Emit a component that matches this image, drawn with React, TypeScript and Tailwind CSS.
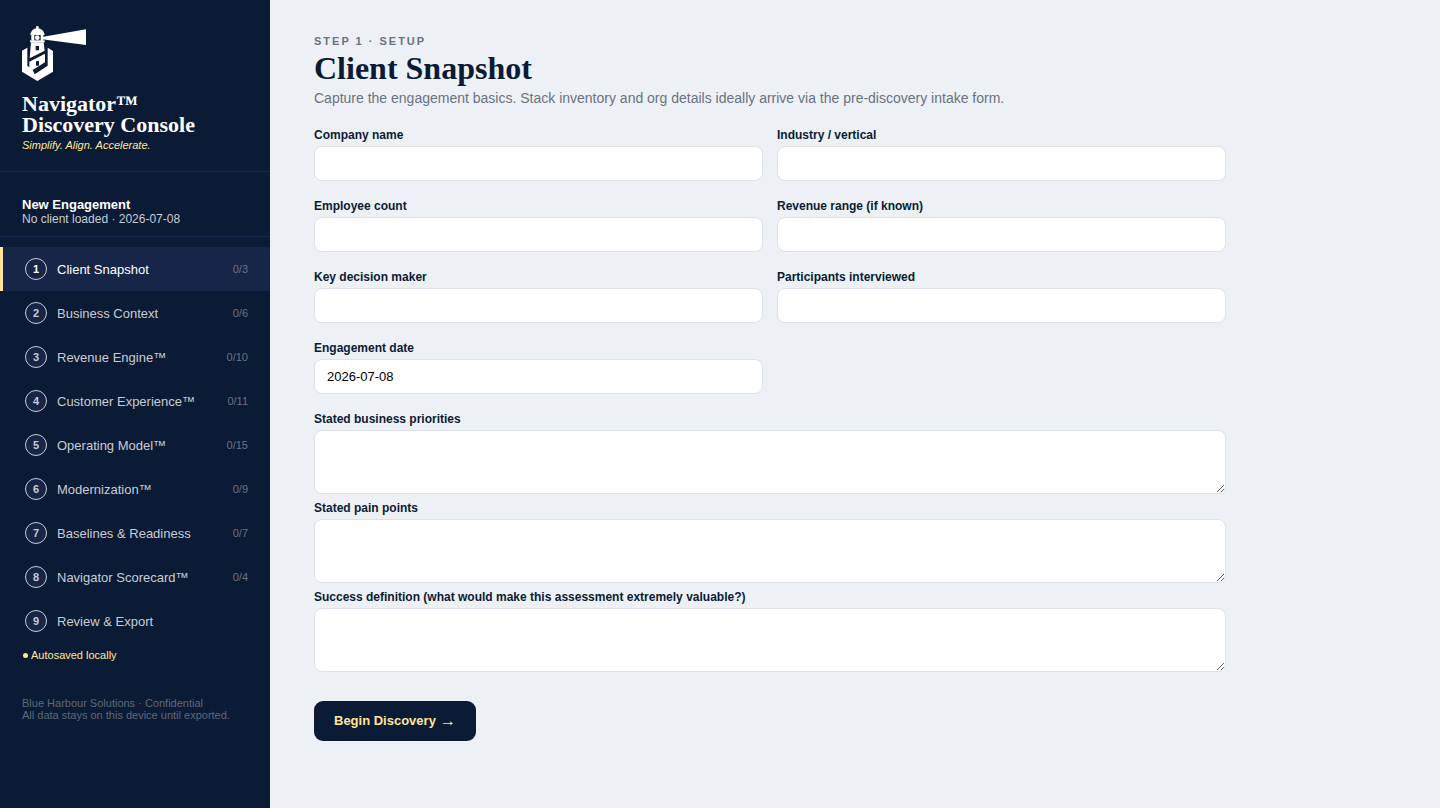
import React from 'react';

interface Step {
    label: string;
    progress?: string;
}

const STEPS: Step[] = [
    { label: 'Client Snapshot', progress: '0/3' },
    { label: 'Business Context', progress: '0/6' },
    { label: 'Revenue Engine™', progress: '0/10' },
    { label: 'Customer Experience™', progress: '0/11' },
    { label: 'Operating Model™', progress: '0/15' },
    { label: 'Modernization™', progress: '0/9' },
    { label: 'Baselines & Readiness', progress: '0/7' },
    { label: 'Navigator Scorecard™', progress: '0/4' },
    { label: 'Review & Export' },
];

const FIELDS = [
    { id: 'company', label: 'Company name', value: '' },
    { id: 'industry', label: 'Industry / vertical', value: '' },
    { id: 'employees', label: 'Employee count', value: '' },
    { id: 'revenue', label: 'Revenue range (if known)', value: '' },
    { id: 'decision-maker', label: 'Key decision maker', value: '' },
    { id: 'participants', label: 'Participants interviewed', value: '' },
    { id: 'date', label: 'Engagement date', value: '2026-07-08' },
];

const NOTES = [
    { id: 'priorities', label: 'Stated business priorities' },
    { id: 'pain-points', label: 'Stated pain points' },
    { id: 'success', label: 'Success definition (what would make this assessment extremely valuable?)' },
];

const LighthouseLogo = () => (
    <svg viewBox="36 33 192 165" className="h-[55px] w-16" fill="#fff" aria-hidden="true">
        {/* Lantern room */}
        <circle cx="82" cy="37" r="4" />
        <path d="M61 60C62 48 71 40 82 39C93 40 102 48 104 60Z" />
        <path d="M64 60H73V77H64ZM92 60H100V77H92Z" />
        <circle cx="82" cy="68" r="7" />
        <path d="M60 76H104V82H60Z" />
        {/* Beam */}
        <path d="M96 66L228 43V90L96 73Z" />
        {/* Tower */}
        <path fillRule="evenodd" d="M63 82H101L104 107L59 130ZM77 93V106H87V93Z" />
        <path fillRule="evenodd" d="M58 140L105 116V142L68 165L58 159ZM78 139V152H87V137Z" />
        {/* Hexagonal base */}
        <path d="M36 107L52 98V152L68 165L74 178L113 152V98L129 108V170L82 198L36 170Z" />
    </svg>
);

const Sidebar = () => (
    <aside className="w-[270px] shrink-0 bg-[#0b1b35] text-[#c9ccd4]">
        <div className="border-b border-[#17264a] px-[22px] pt-[26px] pb-[18px]">
            <LighthouseLogo />
            <div className="mt-3 font-['Liberation_Serif',serif] text-[22px] leading-[21px] font-bold text-white">
                Navigator™
                <br />
                Discovery Console
            </div>
            <p className="mt-[3px] pb-px text-[11px] leading-[14px] text-[#ffe69b] italic">
                Simplify. Align. Accelerate.
            </p>
        </div>
        <div className="border-b border-[#17264a] px-[22px] pt-[25px] pb-[10px]">
            <p className="text-[13px] leading-[15px] font-bold text-white">New Engagement</p>
            <p className="text-[12px] leading-[14px]">No client loaded · 2026-07-08</p>
        </div>
        <nav className="pt-[10px]">
            {STEPS.map((step, i) => (
                <button
                    key={step.label}
                    type="button"
                    aria-current={i === 0 ? 'step' : undefined}
                    className={`flex h-11 w-full items-center gap-[10px] border-l-[3px] px-[22px] text-left text-[13px] leading-[18px] ${
                        i === 0 ? 'border-[#ffe69b] bg-[#172549] text-white' : 'border-transparent'
                    }`}
                >
                    <span className="flex size-[22px] items-center justify-center rounded-full border border-[#c9ccd4] bg-[#172549] text-[11px] font-bold">
                        {i + 1}
                    </span>
                    <span className="flex-1 pt-px">{step.label}</span>
                    {step.progress && <span className="text-[11px] text-[#6b7280]">{step.progress}</span>}
                </button>
            ))}
        </nav>
        <p className="flex items-center gap-[3px] px-[23px] pt-[6px] text-[11px] leading-[13px] text-[#ffe69b]">
            <span className="size-[5px] rounded-full bg-[#ffe69b]" />
            Autosaved locally
        </p>
        <footer className="px-[22px] pt-[35px] pb-6 text-[11px] leading-[12px] text-[#5f6879]">
            Blue Harbour Solutions · Confidential
            <br />
            All data stays on this device until exported.
        </footer>
    </aside>
);

export default function App() {
    return (
        <div className="flex min-h-screen bg-[#edf1f6] font-['Liberation_Sans',Arial,sans-serif] text-[#0b1b35]">
            <Sidebar />
            <main className="max-w-[1000px] min-w-0 flex-1 px-11 pt-[34px] pb-16">
                <p className="text-[11px] leading-[14px] font-bold tracking-[2px] text-[#6b7280]">STEP 1 · SETUP</p>
                <h1 className="mt-[3px] font-['Liberation_Serif',serif] text-[32px] leading-[34px] font-bold">
                    Client Snapshot
                </h1>
                <p className="mt-[5px] text-[14px] leading-[16px] text-[#6b7280]">
                    Capture the engagement basics. Stack inventory and org details ideally arrive via the pre-discovery
                    intake form.
                </p>

                <form onSubmit={e => e.preventDefault()}>
                    <div className="mt-[22px] grid grid-cols-2 gap-x-[14px]">
                        {FIELDS.map(field => (
                            <div key={field.id} className="pb-[18px]">
                                <label htmlFor={field.id} className="block text-[12px] leading-[14px] font-bold">
                                    {field.label}
                                </label>
                                <input
                                    id={field.id}
                                    type="text"
                                    defaultValue={field.value}
                                    className="mt-1 block h-[35px] w-full rounded-lg border border-[#dde1ea] bg-white px-3 text-[13px] text-black"
                                />
                            </div>
                        ))}
                    </div>
                    {NOTES.map(note => (
                        <div key={note.id} className="pb-[7px]">
                            <label htmlFor={note.id} className="block text-[12px] leading-[14px] font-bold">
                                {note.label}
                            </label>
                            <textarea
                                id={note.id}
                                className="mt-1 block h-16 w-full resize-y rounded-lg border border-[#dde1ea] bg-white px-3 py-2 text-[13px] text-black"
                            />
                        </div>
                    ))}
                    <button
                        type="submit"
                        className="mt-[22px] flex h-10 items-center gap-1 rounded-[9px] bg-[#0b1b35] px-5 text-[13px] font-bold text-[#ffe69b]"
                    >
                        Begin Discovery
                        <span className="text-[16px] font-normal">→</span>
                    </button>
                </form>
            </main>
        </div>
    );
}
